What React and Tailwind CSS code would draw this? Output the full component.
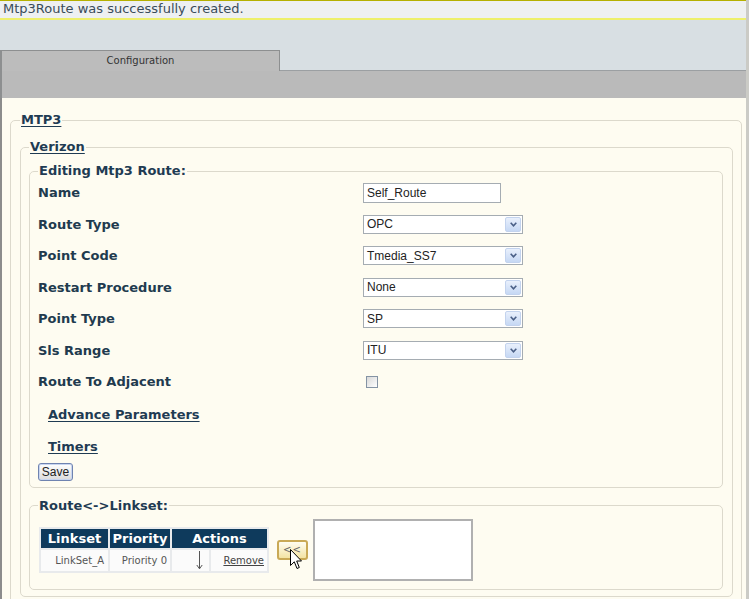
import React from "react";

const rows = [
  { label: "Route Type", value: "OPC" },
  { label: "Point Code", value: "Tmedia_SS7" },
  { label: "Restart Procedure", value: "None" },
  { label: "Point Type", value: "SP" },
  { label: "Sls Range", value: "ITU" },
];

const Select = ({ value }) => (
  <div className="flex h-[19px] w-[160px] items-center border border-[#a5acb2] bg-white">
    <span className="flex-1 pl-[3px] font-['Liberation_Sans',Arial,sans-serif] text-[12px] leading-none text-[#222]">
      {value}
    </span>
    <span className="mr-[1px] flex h-[15px] w-[16px] items-center justify-center rounded-[2px] border border-[#c3d3ee] bg-linear-to-b from-[#e9f0fc] to-[#c6d8f4]">
      <svg width="7" height="5" viewBox="0 0 7 5">
        <path d="M0.7 0.8 L3.5 3.8 L6.3 0.8" stroke="#4a5f86" strokeWidth="1.6" fill="none" />
      </svg>
    </span>
  </div>
);

const Row = ({ label, children }) => (
  <div className="flex h-[31.5px] items-center">
    <div className="w-[325px] text-[13px] font-bold text-[#213a4e]">{label}</div>
    {children}
  </div>
);

const Legend = ({ children, link }) => (
  <legend
    className={
      "px-[1px] text-[13px] font-bold leading-[16px] text-[#1f3b53] " +
      (link ? "underline underline-offset-2" : "")
    }
  >
    {children}
  </legend>
);

const App = () => {
  return (
    <div className="relative h-[599px] w-[749px] overflow-hidden border-r-[3px] border-[#cbcbc6] bg-[#fefcf1] font-['DejaVu_Sans',Verdana,sans-serif]">
      {/* status message */}
      <div className="h-[20px] border-t border-b-2 border-t-[#b5b000] border-b-[#eef06a] bg-[#eef0f1] pl-[3px] text-[13px] leading-[16px] text-[#3a4c5a]">
        Mtp3Route was successfully created.
      </div>

      {/* tabs */}
      <div className="flex h-[78px] flex-col bg-[#d8dfe3]">
        <div className="h-[30px]" />
        <div className="flex h-[21px]">
          <div className="w-[280px] border-t border-r border-l-2 border-[#8d8f90] bg-[#bcbcbc] text-center text-[10px] leading-[20px] text-[#333]">
            Configuration
          </div>
          <div className="flex-1 border-b border-[#9b9fa2]" />
        </div>
        <div className="h-[27px] border-l-2 border-[#8d8f90] bg-[#bababa]" />
      </div>

      {/* content */}
      <div className="h-[501px] border-l-2 border-[#8c8c8c] pt-[14px] pr-[4px] pl-[8px]">
        <fieldset className="h-[600px] rounded-[5px] border border-[#dcd9cc] pt-[11px] pr-[8px] pl-[9px]">
          <Legend link>MTP3</Legend>
          <fieldset className="rounded-[5px] border border-[#dcd9cc] pt-[8px] pr-[9px] pb-[6px] pl-[8px]">
            <Legend link>Verizon</Legend>

            <fieldset className="rounded-[5px] border border-[#dcd9cc] pr-[8px] pb-[6px] pl-[8px]">
              <Legend>Editing Mtp3 Route:</Legend>
              <div className="-mt-[2px]">
                <Row label="Name">
                  <div className="flex h-[20px] w-[138px] items-center border border-[#a5acb2] bg-white pl-[3px] font-['Liberation_Sans',Arial,sans-serif] text-[12px] text-[#222]">
                    Self_Route
                  </div>
                </Row>
                {rows.map((r) => (
                  <Row key={r.label} label={r.label}>
                    <Select value={r.value} />
                  </Row>
                ))}
                <Row label="Route To Adjacent">
                  <span className="ml-[3px] block h-[12px] w-[12px] border border-[#8493a4] bg-linear-to-br from-[#d8d8d8] to-white" />
                </Row>
              </div>
              <div className="flex h-[34px] items-center pl-[10px] text-[13px] font-bold text-[#1f3b53] underline underline-offset-2">
                Advance Parameters
              </div>
              <div className="flex h-[31px] items-center pl-[10px] text-[13px] font-bold text-[#1f3b53] underline underline-offset-2">
                Timers
              </div>
              <button className="block h-[18px] w-[35px] rounded-[3px] border border-[#6f83b0] bg-linear-to-b from-white to-[#dcdcdc] font-['Liberation_Sans',Arial,sans-serif] text-[12px] leading-none text-[#222] shadow-[inset_0_0_0_1px_#c9d6f0]">
                Save
              </button>
            </fieldset>

            <fieldset className="mt-[10px] rounded-[5px] border border-[#dcd9cc] pt-[5px] pr-[8px] pb-[8px] pl-[8px]">
              <Legend>Route&lt;-&gt;Linkset:</Legend>
              <div className="flex items-center pl-[1px]">
                <table className="border-separate border-spacing-[2px] bg-[#e8eaec]">
                  <thead>
                    <tr>
                      <th className="h-[19px] w-[67px] bg-[#0e3a5c] p-0 text-center text-[13px] leading-[19px] font-bold text-white">
                        Linkset
                      </th>
                      <th className="h-[19px] w-[60px] bg-[#0e3a5c] p-0 text-center text-[13px] leading-[19px] font-bold text-white">
                        Priority
                      </th>
                      <th colSpan={2} className="h-[19px] bg-[#0e3a5c] p-0 text-center text-[13px] leading-[19px] font-bold text-white">
                        Actions
                      </th>
                    </tr>
                  </thead>
                  <tbody>
                    <tr>
                      <td className="h-[21px] bg-[#fbfbfb] p-0 pr-[4px] text-right text-[10px] text-[#555]">LinkSet_A</td>
                      <td className="h-[21px] bg-[#fbfbfb] p-0 pr-[3px] text-right text-[10px] text-[#555]">Priority 0</td>
                      <td className="h-[21px] w-[37px] bg-[#fbfbfb] p-0 pr-[6px] text-right">
                        <svg className="ml-auto" width="7" height="20" viewBox="0 0 7 20">
                          <path d="M3.5 1 V18.5 M0.8 15 L3.5 18.8 L6.2 15" stroke="#555" strokeWidth="1" fill="none" />
                        </svg>
                      </td>
                      <td className="h-[21px] w-[56px] bg-[#fbfbfb] p-0 pr-[3px] text-right text-[10px] text-[#444] underline">
                        Remove
                      </td>
                    </tr>
                  </tbody>
                </table>

                <div className="relative ml-[8px]">
                  <button className="block h-[20px] w-[31px] rounded-[3px] border-2 border-[#c9a955] bg-linear-to-b from-[#fffdf0] to-[#f3e3a2] text-[10px] leading-none tracking-[1px] text-[#666]">
                    &lt;&lt;
                  </button>
                  <svg className="absolute top-[9px] left-[13px]" width="13" height="21" viewBox="0 0 13 21">
                    <path
                      d="M0.5 0.5 L0.5 16.5 L4.3 12.8 L7 19.5 L9.3 18.5 L6.7 12 L11.5 12 Z"
                      fill="white"
                      stroke="black"
                      strokeWidth="1"
                      strokeLinejoin="round"
                    />
                  </svg>
                </div>

                <div className="ml-[5px] h-[62px] w-[160px] border-2 border-[#b0b0b0] bg-white" />
              </div>
            </fieldset>
          </fieldset>
        </fieldset>
      </div>
    </div>
  );
};

export default App;
